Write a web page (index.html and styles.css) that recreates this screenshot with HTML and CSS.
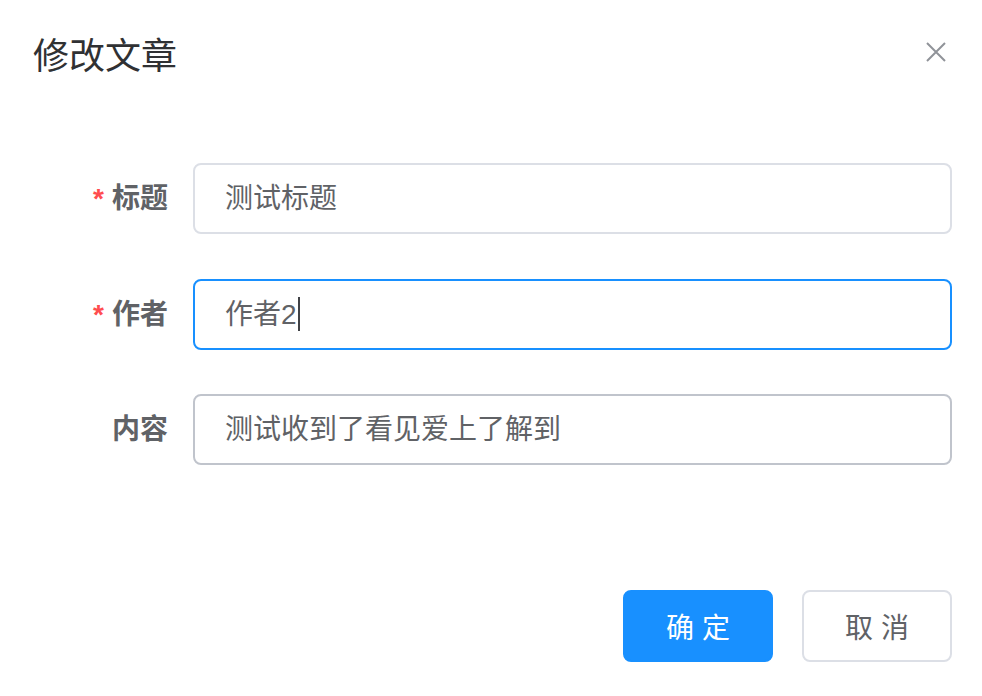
FILE: index.html
```html
<!DOCTYPE html>
<html lang="zh-CN">
<head>
<meta charset="utf-8">
<title>修改文章</title>
<link rel="stylesheet" href="styles.css">
</head>
<body>
<div class="dialog">
  <div class="dialog-header">
    <span class="dialog-title">修改文章</span>
    <button class="dialog-close" aria-label="Close">
      <svg width="22" height="22" viewBox="0 0 22 22"><path d="M2 2 L20 20 M20 2 L2 20" stroke="#909399" stroke-width="2" fill="none"/></svg>
    </button>
  </div>
  <div class="dialog-body">
    <div class="form-item">
      <label class="form-label"><span class="required">*</span>标题</label>
      <div class="input">测试标题</div>
    </div>
    <div class="form-item">
      <label class="form-label"><span class="required">*</span>作者</label>
      <div class="input is-focus">作者2<span class="caret"></span></div>
    </div>
    <div class="form-item">
      <label class="form-label">内容</label>
      <div class="input is-hover">测试收到了看见爱上了解到</div>
    </div>
  </div>
  <div class="dialog-footer">
    <button class="btn btn-primary">确 定</button>
    <button class="btn btn-default">取 消</button>
  </div>
</div>
</body>
</html>
```

FILE: styles.css
```css
html, body {
  margin: 0;
  padding: 0;
  background: #ffffff;
}
body {
  font-family: "Liberation Sans", "Noto Sans CJK SC", sans-serif;
  width: 982px;
  height: 696px;
  overflow: hidden;
}
.dialog {
  position: relative;
  width: 982px;
}
.dialog-header {
  padding: 33px 30px 20px 33px;
}
.dialog-title {
  display: block;
  font-size: 36px;
  line-height: 48px;
  color: #303133;
}
.dialog-close {
  position: absolute;
  top: 41px;
  right: 35px;
  padding: 0;
  border: 0;
  background: transparent;
  width: 22px;
  height: 22px;
  display: flex;
}
.dialog-body {
  padding: 62px 30px 0 31px;
}
.form-item {
  display: flex;
  height: 71px;
  margin-bottom: 44.5px;
}
.form-label {
  width: 162px;
  box-sizing: border-box;
  padding-right: 25px;
  text-align: right;
  font-size: 28px;
  line-height: 71px;
  color: #606266;
  font-weight: 700;
}
.required {
  color: #ff4d4f;
  margin-right: 8px;
  font-weight: 700;
}
.input {
  flex: 1;
  box-sizing: border-box;
  height: 71px;
  border: 2px solid #dcdfe6;
  border-radius: 8px;
  padding: 0 30px;
  font-size: 28px;
  line-height: 67px;
  color: #606266;
  display: flex;
  align-items: center;
}
.input.is-focus {
  border-color: #1890ff;
}
.input.is-hover {
  border-color: #c0c4cc;
}
.caret {
  display: inline-block;
  width: 2px;
  height: 34px;
  background: #404246;
  margin-left: 1px;
}
.dialog-footer {
  display: flex;
  justify-content: flex-end;
  gap: 29px;
  padding: 80px 30px 0 31px;
}
.btn {
  width: 150px;
  height: 72px;
  box-sizing: border-box;
  border-radius: 8px;
  font-family: "Liberation Sans", "Noto Sans CJK SC", sans-serif;
  font-size: 28px;
  padding: 0;
  cursor: pointer;
}
.btn-primary {
  background: #1890ff;
  border: 2px solid #1890ff;
  color: #ffffff;
}
.btn-default {
  background: #ffffff;
  border: 2px solid #dcdfe6;
  color: #606266;
}
```
